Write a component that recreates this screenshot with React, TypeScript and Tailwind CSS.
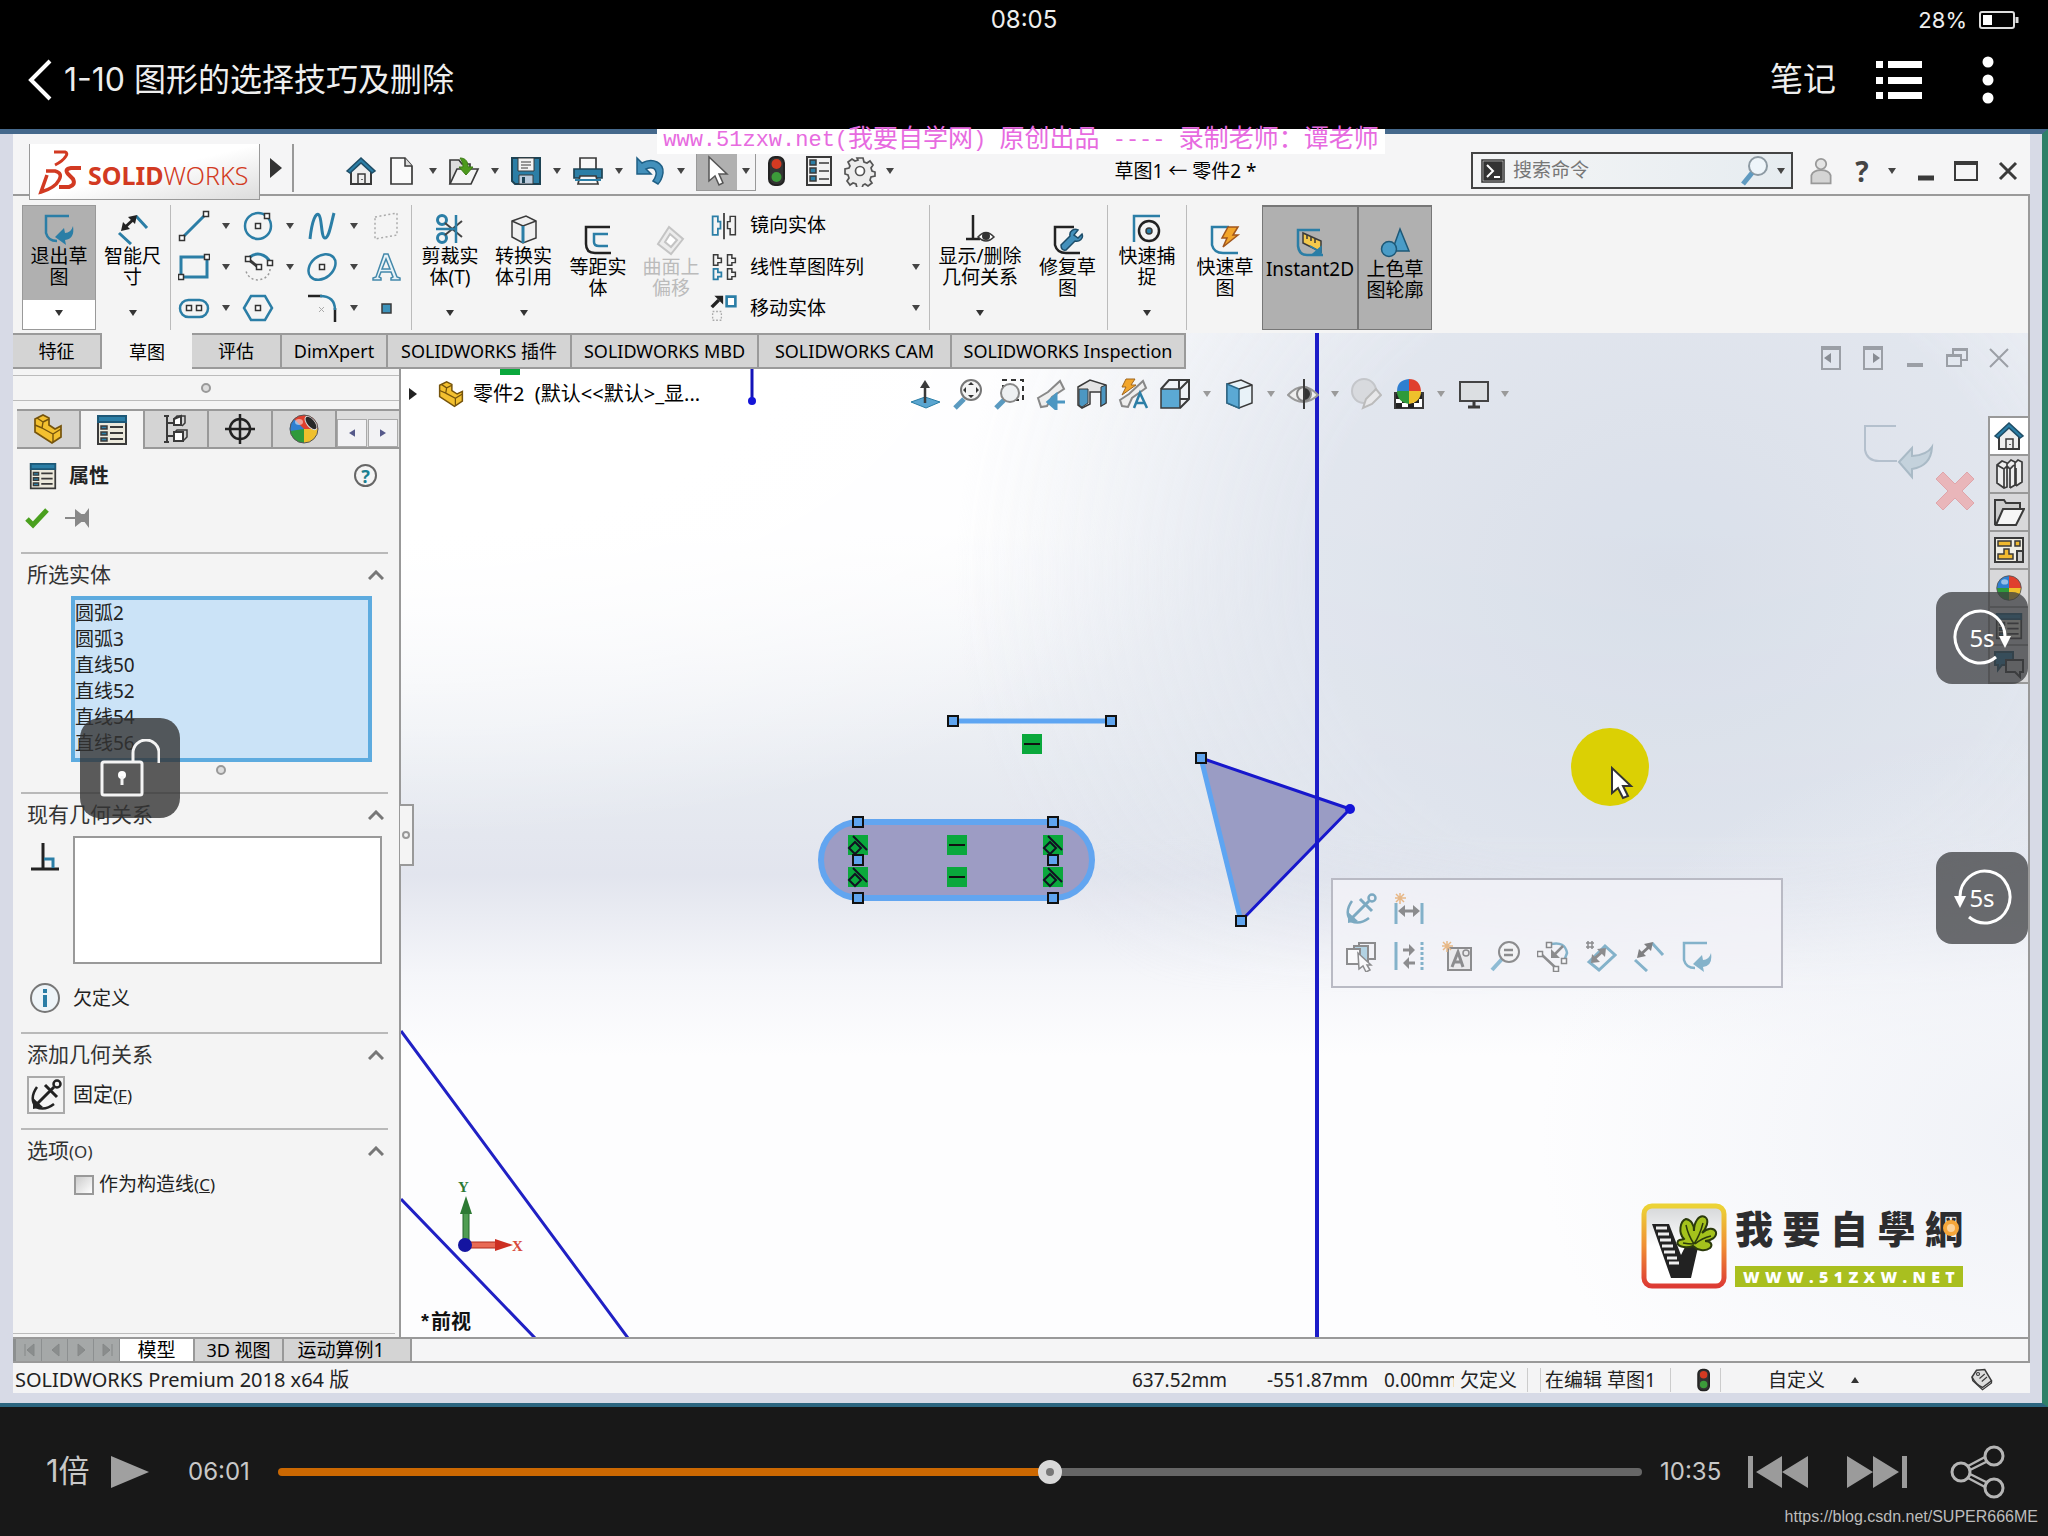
import type { ReactNode } from "react";

const BLUE = "#2b7ea6";
const DARK = "#3a3a3a";

function Ico({ children, size = "w-8 h-8", box = "0 0 32 32" }: { children: ReactNode; size?: string; box?: string }) {
  return (
    <svg viewBox={box} className={`${size} shrink-0`} fill="none" stroke={DARK} strokeWidth="2" aria-hidden="true">
      {children}
    </svg>
  );
}

function Caret({ className = "w-5", color = "#444" }: { className?: string; color?: string }) {
  return (
    <button type="button" aria-label="More" className={`flex items-center justify-center self-stretch shrink-0 ${className}`}>
      <svg viewBox="0 0 8 6" className="w-2 h-[6px]" fill={color}>
        <path d="M0 0h8l-4 6z" />
      </svg>
    </button>
  );
}

function IconButton({ label, className = "", children }: { label: string; className?: string; children: ReactNode }) {
  return (
    <button type="button" aria-label={label} className={`flex items-center justify-center shrink-0 ${className}`}>
      {children}
    </button>
  );
}

/* ---------- icons ---------- */

const HomeIcon = () => (
  <Ico>
    <path d="M6 15v14h20V15L16 6z" fill="#eee" />
    <path d="M13 29V19h7v10M17 24v1" strokeWidth="1.5" />
    <path d="M2 16 16 3l14 13-3 2L16 8 5 18z" fill={BLUE} stroke="#1f4d66" strokeWidth="1.5" />
  </Ico>
);
const NewIcon = () => (
  <Ico>
    <path d="M5 3h14l7 8v18H5z" fill="#fafafa" strokeWidth="1.7" />
    <path d="M19 3v8h7" fill="#ddd" strokeWidth="1.5" />
  </Ico>
);
const OpenIcon = () => (
  <Ico>
    <path d="M2 29V5h9l3 4h8v5" fill="#ddd" strokeWidth="1.7" />
    <path d="M2 29 9 14h21l-7 15z" fill="#f4f4f4" strokeWidth="1.7" />
    <path d="M12 3c6 0 8 4 8 9h5l-7 8-7-8h4c0-4-1-6-3-9z" fill="#4c9a1c" stroke="#3c7c14" strokeWidth="1" />
  </Ico>
);
const SaveIcon = () => (
  <Ico>
    <path d="M2 3h28v26H5l-3-3z" fill={BLUE} stroke="#1e4354" />
    <path d="M8 3h16v13H8z" fill="#f3f3f3" strokeWidth="1" />
    <path d="M11 7h10M11 10h10M11 13h7" strokeWidth="1" />
    <path d="M9 20h14v9H9z" fill="#bcd" strokeWidth="1" />
    <path d="M12 22h3v6h-3z" fill="#1e4354" stroke="none" />
  </Ico>
);
const PrintIcon = () => (
  <Ico>
    <path d="M8 3h16v12H8z" fill="#f8f8f8" strokeWidth="1.7" />
    <path d="M2 14h28v9H2z" fill={BLUE} stroke="#1e4354" strokeWidth="1.7" />
    <path d="M8 21h16l2 8H6z" fill="#f8f8f8" strokeWidth="1.7" />
    <path d="M3 25h26" stroke={BLUE} />
  </Ico>
);
const UndoIcon = () => (
  <Ico>
    <path d="m3 3 5 5c11-6 22 0 21 10-1 6-3 9-5 11l-5-3c6-8 3-16-7-12l5 5H3z" fill="#4390bb" stroke="#1f5f85" strokeWidth="1.5" />
  </Ico>
);
const CursorIcon = () => (
  <Ico size="w-8 h-9">
    <path d="M8 2v24l6-5 4 9 4-2-4-9h8z" fill="#fff" stroke="#555" strokeWidth="1.5" />
  </Ico>
);
const TrafficIcon = ({ size = "w-8 h-8" }: { size?: string }) => (
  <Ico size={size}>
    <rect x="8" y="2" width="15" height="28" rx="6" fill="#333" stroke="#222" />
    <circle cx="15.500" cy="9" r="5" fill="#d33a22" stroke="none" />
    <circle cx="15.500" cy="22" r="5" fill="#3c9b3a" stroke="none" />
  </Ico>
);
const OptionsIcon = () => (
  <Ico>
    <path d="M4 2h24v28H4z" fill="#f2f2f2" />
    <path d="M7 5h6v5H7zM7 13h6v5H7zM7 21h6v5H7z" fill={BLUE} strokeWidth="1.5" />
    <path d="M16 8h10M16 16h10M16 24h10" strokeWidth="1.5" />
  </Ico>
);
const GearIcon = () => (
  <Ico>
    <path d="M13 3h6l1 4 3 1 3-2 3 4-2 3 1 3 3 1v4l-4 1-1 3 2 3-4 3-3-2-2 1-1 3h-5l-1-4-3-1-3 2-3-4 2-3-1-3-3-1v-5l4-1 1-2-2-4 4-3 3 2 3-1z" fill="#ededed" stroke="#555" strokeWidth="1.7" />
    <circle cx="16" cy="16" r="4.500" fill="#fff" stroke="#555" strokeWidth="1.700" />
  </Ico>
);
const ExitSketchIcon = () => (
  <Ico>
    <path d="M26 3H3v17q2 8 11 8" stroke={BLUE} strokeWidth="2.500" />
    <path d="m12 24 9-9 1 5q6 0 8-7 2 13-8 14l1 5z" fill={BLUE} stroke="none" />
  </Ico>
);
const DimensionIcon = () => (
  <Ico>
    <path d="m19 3 11 12M2 20l12 11" stroke={BLUE} strokeWidth="3" />
    <path d="m6 16 12-11" stroke="#222" strokeWidth="3" />
    <path d="m4 18 2-9 7 7zM20 2l-9 2 7 7z" fill="#222" stroke="none" />
  </Ico>
);
const Node = ({ x, y }: { x: number; y: number }) => <rect x={x - 2.5} y={y - 2.5} width="5" height="5" fill="#fff" stroke="#333" strokeWidth="1.500" />;

const LineIcon = () => (
  <Ico><path d="M4 28 28 4" stroke={BLUE} strokeWidth="3" /><Node x={4} y={28} /><Node x={28} y={4} /></Ico>
);
const CircleIcon = () => (
  <Ico><circle cx="16" cy="16" r="13" stroke={BLUE} strokeWidth="2.500" /><Node x={16} y={16} /><Node x={25} y={6} /></Ico>
);
const SplineIcon = () => (
  <Ico><path d="M4 29C6 10 10 2 13 5s2 23 6 23S25 14 28 3" stroke={BLUE} strokeWidth="3" /></Ico>
);
const PlaneIcon = () => (
  <Ico><path d="m5 7 22-4v22L5 29z" stroke="#aaa" strokeWidth="1.500" strokeDasharray="2 2.500" /></Ico>
);
const RectIcon = () => (
  <Ico><path d="M3 6h26v20H3z" stroke={BLUE} strokeWidth="3" /><Node x={29} y={6} /><Node x={3} y={26} /></Ico>
);
const ArcIcon = () => (
  <Ico>
    <path d="M8 6c9-7 20 0 20 8" stroke={BLUE} strokeWidth="3" />
    <path d="M28 18c0 12-20 16-24 2" stroke="#999" strokeWidth="1.500" strokeDasharray="2 2.500" />
    <path d="m6 8 10 8" strokeWidth="3" />
    <Node x={6} y={8} /><Node x={17} y={16} /><Node x={28} y={12} />
  </Ico>
);
const EllipseIcon = () => (
  <Ico>
    <ellipse cx="16" cy="16" rx="15" ry="11" transform="rotate(-40 16 16)" stroke={BLUE} strokeWidth="2.500" />
    <Node x={16} y={16} />
  </Ico>
);
const TextIcon = () => (
  <Ico>
    <path d="M3 29h8v-2l-2-1 2-5h10l2 5-2 1v2h9v-2l-3-1L18 3h-4L6 26l-3 1zM12 18l4-10 4 10z" stroke="#4388aa" strokeWidth="1.500" fill="#e8f3f8" />
  </Ico>
);
const SlotIcon = () => (
  <Ico><rect x="2" y="8" width="28" height="17" rx="8.500" stroke={BLUE} strokeWidth="2.500" /><Node x={11} y={16} /><Node x={21} y={16} /></Ico>
);
const PolygonIcon = () => (
  <Ico><path d="M9 4h14l7 12-7 12H9L2 16z" stroke={BLUE} strokeWidth="2.500" /><Node x={16} y={16} /></Ico>
);
const FilletIcon = () => (
  <Ico>
    <path d="M2 4h14M29 16v14" stroke="#222" strokeWidth="2.500" />
    <path d="M14 4q15 0 15 14" stroke={BLUE} strokeWidth="2.500" />
    <path d="m13 15 5 5m0-5-5 5" stroke="#aaa" strokeWidth="1" />
  </Ico>
);
const PointIcon = () => <Ico><path d="M12 12h9v9h-9z" fill="#3c93bb" strokeWidth="1.500" /></Ico>;

const TrimIcon = () => (
  <Ico>
    <circle cx="8" cy="7" r="4.500" stroke={BLUE} strokeWidth="3" />
    <circle cx="8" cy="25" r="4.500" stroke={BLUE} strokeWidth="3" />
    <path d="m11 10 17 14M11 22 28 8" stroke="#444" />
    <path d="M22 2v28M2 16h20" stroke={BLUE} strokeWidth="2.500" />
  </Ico>
);
const ConvertIcon = () => (
  <Ico>
    <path d="m4 8 14-5 10 5v17l-13 5-11-6z" fill="#f0f0f0" strokeWidth="1.500" />
    <path d="m4 8 11 5 13-5" strokeWidth="1.500" />
    <path d="M15 13v17" stroke={BLUE} strokeWidth="3" />
  </Ico>
);
const OffsetIcon = () => (
  <Ico>
    <path d="M28 3H4v17q0 9 9 9h16" stroke="#222" strokeWidth="2.500" />
    <path d="M26 10H12v8q0 4 5 4h9" stroke={BLUE} strokeWidth="2.500" />
  </Ico>
);
const SurfaceOffsetIcon = () => (
  <Ico>
    <path d="m14 3 14 12-12 15L3 20z" stroke="#c4c4c4" fill="#ececec" />
    <path d="m15 10 7 6-6 7-6-5z" stroke="#c4c4c4" fill="#fff" />
  </Ico>
);
const MirrorIcon = () => (
  <Ico>
    <path d="M3 5h6v6h3v8H9v7H3z" stroke={BLUE} />
    <path d="M29 5h-6v6h-3v8h3v7h6z" strokeWidth="1.700" />
    <path d="M16 1v30" />
  </Ico>
);
const PatternIcon = () => (
  <Ico>
    <path d="M4 2h5v4h4v5H9v3H4zM20 2h5v4h4v5h-4v3h-5zM20 18h5v4h4v5h-4v3h-5z" strokeWidth="1.700" />
    <path d="M4 18h5v4h4v5H9v3H4z" stroke={BLUE} />
  </Ico>
);
const MoveIcon = () => (
  <Ico>
    <path d="m2 15 8-8" stroke="#222" strokeWidth="4" />
    <path d="M5 2h10v10z" fill="#222" stroke="none" />
    <path d="M19 3h10v11H19z" stroke={BLUE} strokeWidth="3" fill="#fff" />
    <path d="M3 20h10v10H3z" stroke="#aaa" strokeWidth="1.500" strokeDasharray="2 2" />
  </Ico>
);
const RelationsIcon = () => (
  <Ico>
    <path d="M9 2v24M2 26h14" stroke="#222" strokeWidth="2.500" />
    <path d="M14 24q8-9 16 0-8 8-16 0z" fill="#fff" strokeWidth="1.500" />
    <circle cx="22" cy="23" r="4" fill="#333" stroke="none" />
  </Ico>
);
const RepairIcon = () => (
  <Ico>
    <path d="M22 3H3v18q2 8 11 8h14" stroke="#222" strokeWidth="2.500" />
    <path d="m9 21 9-9c-1-5 4-8 8-6l-4 5 4 3 4-4c2 5-3 8-7 7l-9 9q-5 1-5-5z" fill="#4390bb" stroke="#1c4c68" strokeWidth="1.500" />
  </Ico>
);
const SnapIcon = () => (
  <Ico>
    <path d="M3 29V3h26" stroke={BLUE} strokeWidth="2.500" />
    <circle cx="18" cy="18" r="10" stroke="#222" strokeWidth="2.500" />
    <circle cx="18" cy="18" r="3" fill={BLUE} strokeWidth="1.500" />
  </Ico>
);
const RapidIcon = () => (
  <Ico>
    <path d="M20 3H3v18q2 8 11 8h15" stroke={BLUE} strokeWidth="2.500" />
    <path d="M19 3h10l-5 8h5L14 23l4-9h-5z" fill="#f2a62c" stroke="#a1561d" strokeWidth="1.500" />
  </Ico>
);
const Instant2DIcon = () => (
  <Ico>
    <path d="M26 4H4v16q1 9 9 9h16" stroke={BLUE} strokeWidth="2.500" />
    <path d="M9 7v10l18 9V15z" fill="#f3c84b" strokeWidth="1.500" />
    <path d="M13 9v4M17 11v4M21 13v4" strokeWidth="1.500" />
    <path d="m16 20 10 6M27 21v7h-8z" fill={BLUE} stroke={BLUE} strokeWidth="1.500" />
  </Ico>
);
const ShadedIcon = () => (
  <Ico>
    <path d="m21 3 9 22H13z" fill="#4a9cc7" stroke="#1d5877" strokeWidth="1.500" />
    <circle cx="10" cy="23" r="7.500" fill="#4a9cc7" stroke="#1d5877" strokeWidth="1.500" />
  </Ico>
);
const PartIcon = ({ size = "w-8 h-8" }: { size?: string }) => (
  <Ico size={size}>
    <path d="M3 13V6l8-4 6 3v7l6 4 6-3v11l-9 6L3 19z" fill="#f3c02f" stroke="#76540c" strokeWidth="1.700" />
    <path d="m3 12 7 3 1-6-6-4M11 9l6-3M10 15l11 6 8-5M21 21v8" stroke="#76540c" strokeWidth="1.400" />
  </Ico>
);
const PropertyIcon = ({ size = "w-8 h-8" }: { size?: string }) => (
  <Ico size={size}>
    <path d="M2 2h28v28H2z" fill="#ece9dc" />
    <path d="M2 2h28v6H2z" fill={BLUE} stroke="#1d5877" />
    <path d="M5 12h6v3H5zM5 18h6v3H5zM5 24h6v3H5z" fill={BLUE} strokeWidth="1.500" />
    <path d="M14 13h13M14 19h13M14 25h13" />
  </Ico>
);
const ConfigIcon = () => (
  <Ico>
    <path d="M7 3v26M4 3h5M4 29h5M7 10h7M7 23h7" />
    <path d="m14 6 7-3v9h-7zM14 19h9v9h-9z" fill="#fff" />
    <path d="m14 6 3-3h8v7l-3 3M14 20l3-3h10v7l-4 4" strokeWidth="1.500" />
  </Ico>
);
const TargetIcon = () => (
  <Ico><circle cx="16" cy="16" r="10" stroke="#222" strokeWidth="2.500" /><path d="M16 1v30M1 16h30" stroke="#222" strokeWidth="2.500" /></Ico>
);
const BallIcon = ({ size = "w-8 h-8", hole = false }: { size?: string; hole?: boolean }) => (
  <Ico size={size}>
    <path d="M16 16V2A14 14 0 0 0 2 16z" fill={hole ? "#e0402e" : "#2f7fd0"} stroke="none" />
    <path d="M16 16h14A14 14 0 0 0 16 2z" fill="#e0402e" stroke="none" />
    <path d="M16 16H2a14 14 0 0 0 14 14z" fill="#2f9a3b" stroke="none" />
    <path d="M16 16v14a14 14 0 0 0 14-14z" fill="#efc02c" stroke="none" />
    {hole && <path d="M16 16 6 6A14 14 0 0 0 2 18z" fill="#2f7fd0" stroke="none" />}
    <ellipse cx="11" cy="9" rx="4" ry="3" fill="#fff" opacity=".5" stroke="none" />
    {hole && <ellipse cx="23" cy="10" rx="8" ry="4" transform="rotate(50 23 10)" fill="#282828" stroke="#ddd" strokeWidth="1" />}
    <circle cx="16" cy="16" r="14" stroke="#555" strokeWidth="1" />
  </Ico>
);
const AnchorIcon = ({ color = "#222" }: { color?: string }) => (
  <Ico>
    <circle cx="27" cy="5" r="3.500" stroke={color} strokeWidth="2.500" />
    <path d="M24 8 7 25M15 6l12 12" stroke={color} strokeWidth="3" />
    <path d="M7 8Q-1 19 6 28q9 4 18-3" stroke={color} strokeWidth="2.500" />
    <path d="m3 19 10 9-10 2z" fill={color} stroke="none" />
  </Ico>
);

/* ---------- title bar ---------- */

const quickTools = [
  { label: "New", icon: <NewIcon /> },
  { label: "Open", icon: <OpenIcon /> },
  { label: "Save", icon: <SaveIcon /> },
  { label: "Print", icon: <PrintIcon /> },
  { label: "Undo", icon: <UndoIcon /> },
];

function TitleBar() {
  return (
    <div className="flex h-[60px] shrink-0 items-start bg-[#f5f5f6] pl-4 pr-[3px] pt-[10px]">
      <div className="relative z-10 flex h-14 w-[231px] shrink-0 items-center gap-1 border border-t-0 border-[#999] bg-gradient-to-br from-white via-white to-[#dcdcdc] pl-2">
        <svg viewBox="0 0 46 46" className="h-[46px] w-[46px] shrink-0" fill="none" stroke="#d23a22" strokeWidth="3">
          <path d="M16 3h11q3 1 1 4-3 5-11 9" />
          <path d="M8 22h9q8 2 4 9-4 8-18 12l6-17" strokeWidth="3.500" />
          <path d="M43 19H33q-7 1-3 6l5 5q3 6-4 8H21" strokeWidth="4" />
        </svg>
        <span className="pt-2 text-[25px] leading-none text-[#d23a22]">
          <b>SOLID</b><span className="font-light">WORKS</span>
        </span>
      </div>
      <IconButton label="Expand menu" className="h-12 w-[34px] border-r-2 border-[#999]">
        <svg viewBox="0 0 12 20" className="h-5 w-3" fill="#333"><path d="M0 0v20l12-10z" /></svg>
      </IconButton>
      <div className="ml-[51px] flex h-[46px] items-center pt-2">
        <IconButton label="Home" className="mr-[9px] w-8"><HomeIcon /></IconButton>
        {quickTools.map((t) => (
          <div key={t.label} className="flex w-[62px] items-center">
            <IconButton label={t.label} className="w-8">{t.icon}</IconButton>
            <Caret className="w-[30px]" />
          </div>
        ))}
        <div className="flex h-10 border border-[#999]">
          <IconButton label="Select" className="w-10 bg-[#b0b0b0]"><CursorIcon /></IconButton>
          <Caret className="w-[18px]" />
        </div>
        <IconButton label="Rebuild" className="w-[42px]"><TrafficIcon /></IconButton>
        <IconButton label="File properties" className="w-[42px]"><OptionsIcon /></IconButton>
        <IconButton label="Settings" className="w-10"><GearIcon /></IconButton>
        <Caret className="w-5" />
      </div>
      <h1 className="flex-1 pt-[15px] text-center text-[19px] leading-6 text-black">草图1 ← 零件2 *</h1>
      <form className="mt-2 flex h-[37px] w-[322px] shrink-0 items-center border-2 border-[#444] bg-gradient-to-r from-[#f4f5f6] to-[#e6ecf0] pl-2">
        <svg viewBox="0 0 24 24" className="h-6 w-6 shrink-0" fill="#333" stroke="#333" strokeWidth="1.500">
          <path d="M1 1h22v22H1z" fill="#fff" />
          <path d="M3 3h18v18H3z" />
          <path d="m6 6 6 6-6 6M13 18h6" fill="none" stroke="#fff" strokeWidth="2" />
        </svg>
        <input type="search" aria-label="搜索命令" placeholder="搜索命令" className="ml-2 min-w-0 flex-1 bg-transparent text-[19px] outline-none placeholder:text-[#777]" />
        <IconButton label="Search" className="w-8">
          <Ico size="w-8 h-8">
            <circle cx="19" cy="11" r="9" fill="#eef5fa" stroke="#8d9aa3" />
            <path d="m13 18-9 11" stroke="#5f9ac0" strokeWidth="5" />
          </Ico>
        </IconButton>
        <Caret />
      </form>
      <div className="flex h-[46px] items-center pt-2">
        <IconButton label="Account" className="w-14">
          <Ico size="w-7 h-8">
            <circle cx="16" cy="8" r="6" fill="#e4e4e4" stroke="#999" />
            <path d="M5 30V21q2-6 11-6t11 6v9z" fill="#d4d4d4" stroke="#999" />
          </Ico>
        </IconButton>
        <button type="button" className="w-[26px] text-[28px] font-bold leading-8 text-[#444]">?</button>
        <Caret className="w-[34px]" />
        <IconButton label="Minimize" className="w-[34px]">
          <Ico size="w-6 h-6" box="0 0 24 24"><path d="M4 19h16" strokeWidth="5" /></Ico>
        </IconButton>
        <IconButton label="Maximize" className="w-[46px]">
          <Ico size="w-6 h-6" box="0 0 24 24"><path d="M1 3h22v18H1z" /><path d="M1 4h22" strokeWidth="4" /></Ico>
        </IconButton>
        <IconButton label="Close" className="w-[38px]">
          <Ico size="w-6 h-6" box="0 0 24 24"><path d="m4 4 16 16M20 4 4 20" strokeWidth="3" /></Ico>
        </IconButton>
      </div>
    </div>
  );
}

/* ---------- ribbon ---------- */

type ToolProps = { icon: ReactNode; text: string; width: string; caret?: boolean; tone?: string };

function Tool({ icon, text, width, caret = false, tone = "" }: ToolProps) {
  return (
    <button type="button" className={`flex shrink-0 flex-col items-center ${width} ${tone} ${caret ? "pt-2" : "pt-[19px]"}`}>
      {icon}
      <span className="whitespace-pre pt-px text-[19px] leading-[21px]">{text}</span>
      {caret && (
        <svg viewBox="0 0 8 6" className="mb-[14px] mt-auto h-[6px] w-2" fill="#333"><path d="M0 0h8l-4 6z" /></svg>
      )}
    </button>
  );
}

const Sep = () => <div className="mx-px h-[125px] w-px shrink-0 bg-[#bbb]" />;

const sketchTools = [
  { label: "Line", icon: <LineIcon />, caret: true },
  { label: "Circle", icon: <CircleIcon />, caret: true },
  { label: "Spline", icon: <SplineIcon />, caret: true },
  { label: "Plane", icon: <PlaneIcon />, caret: false },
  { label: "Rectangle", icon: <RectIcon />, caret: true },
  { label: "Arc", icon: <ArcIcon />, caret: true },
  { label: "Ellipse", icon: <EllipseIcon />, caret: true },
  { label: "Text", icon: <TextIcon />, caret: false },
  { label: "Slot", icon: <SlotIcon />, caret: true },
  { label: "Polygon", icon: <PolygonIcon />, caret: false },
  { label: "Fillet", icon: <FilletIcon />, caret: true },
  { label: "Point", icon: <PointIcon />, caret: false },
];

const entityTools = [
  { label: "镜向实体", icon: <MirrorIcon />, caret: false },
  { label: "线性草图阵列", icon: <PatternIcon />, caret: true },
  { label: "移动实体", icon: <MoveIcon />, caret: true },
];

function Ribbon() {
  return (
    <div className="flex h-[141px] shrink-0 items-start border-y-2 border-r-2 border-[#9a9a9a] bg-[#f4f4f4] pl-[9px] pt-[9px]">
      <button type="button" className="flex h-[125px] w-[74px] shrink-0 flex-col items-center border border-[#999] bg-white">
        <span className="flex w-full flex-col items-center bg-[#b0b0b0] pb-3 pt-[7px]">
          <ExitSketchIcon />
          <span className="whitespace-pre pt-px text-[19px] leading-[21px]">{"退出草\n图"}</span>
        </span>
        <svg viewBox="0 0 8 6" className="mb-[13px] mt-auto h-[6px] w-2" fill="#333"><path d="M0 0h8l-4 6z" /></svg>
      </button>
      <div className="flex h-[125px]">
        <Tool icon={<DimensionIcon />} text={"智能尺\n寸"} width="w-[73px]" caret />
        <Sep />
        <div className="grid h-[124px] w-[238px] shrink-0 grid-cols-[64px_64px_64px_40px] grid-rows-3 pl-[2px]">
          {sketchTools.map((t) => (
            <div key={t.label} className="flex items-center">
              <IconButton label={t.label} className="w-10">{t.icon}</IconButton>
              {t.caret && <Caret className="w-6" />}
            </div>
          ))}
        </div>
        <Sep />
        <Tool icon={<TrimIcon />} text={"剪裁实\n体(T)"} width="w-[74px]" caret />
        <Tool icon={<ConvertIcon />} text={"转换实\n体引用"} width="w-[73px]" caret />
        <Tool icon={<OffsetIcon />} text={"等距实\n体"} width="w-[76px]" />
        <Tool icon={<SurfaceOffsetIcon />} text={"曲面上\n偏移"} width="w-[70px]" tone="text-[#bbb]" />
        <div className="grid h-[124px] w-[222px] shrink-0 grid-rows-3">
          {entityTools.map((t) => (
            <div key={t.label} className="flex items-center">
              <button type="button" className="flex flex-1 items-center gap-3 pl-1 text-left text-[19px]">
                <Ico size="w-7 h-7">{t.icon}</Ico>
                {t.label}
              </button>
              {t.caret && <Caret className="w-6" />}
            </div>
          ))}
        </div>
        <Sep />
        <Tool icon={<RelationsIcon />} text={"显示/删除\n几何关系"} width="w-[98px]" caret />
        <Tool icon={<RepairIcon />} text={"修复草\n图"} width="w-[77px]" />
        <Sep />
        <Tool icon={<SnapIcon />} text={"快速捕\n捉"} width="w-[76px]" caret />
        <Sep />
        <Tool icon={<RapidIcon />} text={"快速草\n图"} width="w-[74px]" />
        <Tool icon={<Instant2DIcon />} text="Instant2D" width="w-24" tone="bg-[#b0b0b0] border border-t-2 border-[#777]" />
        <Tool icon={<ShadedIcon />} text={"上色草\n图轮廓"} width="w-[74px]" tone="bg-[#b0b0b0] border border-t-2 border-[#777]" />
      </div>
    </div>
  );
}

const commandTabs = [
  { label: "特征", width: "w-[89px]" },
  { label: "草图", width: "w-[90px]", active: true },
  { label: "评估", width: "w-[90px]" },
  { label: "DimXpert", width: "w-[106px]" },
  { label: "SOLIDWORKS 插件", width: "w-[184px]" },
  { label: "SOLIDWORKS MBD", width: "w-[187px]" },
  { label: "SOLIDWORKS CAM", width: "w-[193px]" },
  { label: "SOLIDWORKS Inspection", width: "w-[234px]" },
];

function CommandTabs() {
  return (
    <div role="tablist" className="absolute left-0 top-0 z-10 flex h-9">
      {commandTabs.map((t) => (
        <button
          key={t.label}
          type="button"
          role="tab"
          aria-selected={!!t.active}
          className={`shrink-0 whitespace-nowrap border-t-2 text-[18px] leading-8 ${t.width} ${
            t.active ? "border-[#f4f4f4] bg-[#f4f4f4]" : "border-b-2 border-r-2 border-[#9a9a9a] bg-[#d4d4d4]"
          }`}
        >
          {t.label}
        </button>
      ))}
    </div>
  );
}

/* ---------- property panel ---------- */

function SectionHead({ children }: { children: ReactNode }) {
  return (
    <button type="button" className="flex h-11 w-full items-center justify-between border-t-2 border-[#b9b9b9] pl-[6px] pr-1 text-[21px] text-[#333]">
      <span>{children}</span>
      <svg viewBox="0 0 16 10" className="h-[10px] w-4" fill="none" stroke="#777" strokeWidth="3"><path d="m1 9 7-7 7 7" /></svg>
    </button>
  );
}

const panelTabs = [
  { label: "FeatureManager", icon: <PartIcon />, active: false },
  { label: "PropertyManager", icon: <PropertyIcon />, active: true },
  { label: "ConfigurationManager", icon: <ConfigIcon />, active: false },
  { label: "DimXpertManager", icon: <TargetIcon />, active: false },
  { label: "DisplayManager", icon: <BallIcon hole />, active: false },
];

const selected = ["圆弧2", "圆弧3", "直线50", "直线52", "直线54", "直线56"];

function PropertyPanel() {
  return (
    <aside className="relative flex w-[388px] shrink-0 flex-col border-r-2 border-[#999] bg-[#f4f4f4] pt-9 text-[#222]">
      <div className="mt-[6px] flex h-[26px] items-center justify-center border-y border-[#bbb]">
        <span className="h-[10px] w-[10px] rounded-full border-2 border-[#999] bg-[#ddd]" />
      </div>
      <div className="mt-2 flex h-10 pl-1" role="tablist">
        {panelTabs.map((t) => (
          <button
            key={t.label}
            type="button"
            role="tab"
            aria-label={t.label}
            aria-selected={t.active}
            className={`flex w-16 shrink-0 items-center justify-center border-r-2 border-t-2 border-[#999] ${t.active ? "" : "border-b-2 bg-[#d4d4d4]"}`}
          >
            {t.icon}
          </button>
        ))}
        <div className="flex flex-1 items-end gap-px border-b-2 border-t-2 border-[#999] bg-[#ddd]">
          {["M8 0v10L0 5z", "M0 0v10l8-5z"].map((d) => (
            <IconButton key={d} label="Scroll tabs" className="h-7 w-[30px] border border-[#aaa] bg-[#f2f2f4]">
              <svg viewBox="0 0 8 10" className="h-2 w-[6px]" fill="#55598a"><path d={d} /></svg>
            </IconButton>
          ))}
        </div>
      </div>
      <div className="flex h-[53px] items-center pl-4 pr-[22px]">
        <PropertyIcon size="w-7 h-7" />
        <h2 className="ml-3 flex-1 text-[20px] font-bold">属性</h2>
        <button type="button" className="flex h-[23px] w-[23px] items-center justify-center rounded-full border-2 border-[#666] text-[18px] font-bold leading-none text-[#1c8090]">?</button>
      </div>
      <div className="flex h-[50px] items-start gap-4 pl-3 pt-1">
        <IconButton label="OK">
          <Ico size="w-6 h-6" box="0 0 24 24"><path d="m2 13 6 6L22 4" stroke="#4aa01e" strokeWidth="5" /></Ico>
        </IconButton>
        <IconButton label="Keep visible">
          <Ico size="w-6 h-6" box="0 0 24 24"><path d="M0 12h11v-7l5 4h4l3-4v14l-3-4h-4l-5 4v-7" fill="#888" stroke="#888" /></Ico>
        </IconButton>
      </div>
      <div className="ml-2 mr-[11px]">
        <SectionHead>所选实体</SectionHead>
        <ul role="listbox" aria-label="所选实体" className="ml-[50px] mr-4 h-[166px] border-4 border-[#5dabdf] bg-[#cbe3f7] text-[19px] leading-[26px]">
          {selected.map((s) => (
            <li key={s} role="option" aria-selected="true">{s}</li>
          ))}
        </ul>
        <div className="flex h-[30px] justify-center pl-8 pt-[3px]">
          <span className="h-[10px] w-[10px] rounded-full border-2 border-[#999] bg-[#ddd]" />
        </div>
        <SectionHead>现有几何关系</SectionHead>
        <div className="flex pl-2">
          <Ico size="w-8 h-9">
            <path d="M14 5v26M2 31h28" stroke="#222" strokeWidth="3" />
            <path d="M15 21h9v9" stroke={BLUE} strokeWidth="3" />
          </Ico>
          <ul role="listbox" aria-label="现有几何关系" className="ml-3 mr-[6px] h-32 flex-1 border-2 border-[#999] bg-white" />
        </div>
        <div className="flex h-[68px] items-center pl-2 text-[19px]">
          <Ico>
            <circle cx="16" cy="16" r="14" fill="#eef4f8" stroke="#777" />
            <path d="M16 13v12M16 7v4" stroke={BLUE} strokeWidth="4" />
          </Ico>
          <span className="ml-3">欠定义</span>
        </div>
        <SectionHead>添加几何关系</SectionHead>
        <button type="button" className="mb-[14px] ml-[6px] flex items-center text-[20px]">
          <span className="mr-2 flex h-[38px] w-[38px] items-center justify-center border-2 border-[#aaa]"><AnchorIcon /></span>
          <span>固定<span className="text-[17px]">(<u>F</u>)</span></span>
        </button>
        <SectionHead>选项<span className="text-[17px]">(O)</span></SectionHead>
        <label className="ml-[53px] flex items-center gap-[5px] text-[19px] leading-6">
          <input type="checkbox" className="h-5 w-5 appearance-none border-2 border-[#999] bg-gradient-to-br from-[#ccc] to-white" />
          <span>作为构造线<span className="text-[17px]">(<u>C</u>)</span></span>
        </label>
      </div>
      <div className="mb-[3px] mr-1 mt-auto h-px bg-[#bbb]" />

      {/* collapse handle */}
      <button type="button" aria-label="Collapse panel" className="absolute left-[387px] top-[471px] z-10 flex h-[62px] w-[14px] items-center justify-center border-2 border-l-0 border-[#999] bg-[#f4f4f4]">
        <span className="h-2 w-2 rounded-full border-2 border-[#999]" />
      </button>
    </aside>
  );
}

/* ---------- graphics area ---------- */

const handles = [
  [552, 388], [710, 388], [457, 489], [652, 489], [457, 527], [652, 527],
  [457, 565], [652, 565], [800, 425], [840, 588],
];
const horizontals = [[631, 411], [556, 512], [556, 544]];
const tangents = [[457, 512], [457, 544], [652, 512], [652, 544]];

function Sketch() {
  return (
    <svg className="absolute inset-0 h-full w-full" fill="none" aria-hidden="true">
      <path d="M351 35v33" stroke="#1414b8" strokeWidth="3" />
      <circle cx="351" cy="68" r="4" fill="#1414d8" />
      <path d="M99 35h20v7H99z" fill="#0aa83c" />
      <path d="M0 698 227 1005M0 866l134 139" stroke="#2020c4" strokeWidth="3" />
      <path d="m800 425 149 51-109 112z" fill="#9a9cc4" />
      <path d="M916 0v1006" stroke="#1c1cc8" strokeWidth="4" />
      <path d="m800 425 149 51-109 112" stroke="#1717cc" strokeWidth="3" />
      <path d="m800 425 40 163M552 388h158" stroke="#5ea5f2" strokeWidth="5" />
      <circle cx="949" cy="476" r="5" fill="#1414d8" />
      <rect x="420" y="489" width="271" height="76" rx="38" fill="#9d9cc4" stroke="#62a5f0" strokeWidth="6" />
      {horizontals.map(([x, y]) => (
        <g key={`${x}-${y}`}>
          <path d={`M${x - 10} ${y - 10}h20v20h-20z`} fill="#0aa83c" />
          <path d={`M${x - 8} ${y}h16`} stroke="#111" strokeWidth="2" />
        </g>
      ))}
      {tangents.map(([x, y]) => (
        <g key={`${x}-${y}`}>
          <path d={`M${x - 10} ${y - 10}h20v20h-20z`} fill="#0aa83c" />
          <path d={`m${x - 5} ${y - 9} 14 14M${x - 9} ${y + 3}l6-6 6 6-6 6z`} stroke="#112" strokeWidth="2" />
        </g>
      ))}
      {handles.map(([x, y]) => (
        <rect key={`${x}-${y}`} x={x - 5} y={y - 5} width="10" height="10" fill="#5fa4ee" stroke="#111" strokeWidth="2" />
      ))}

      {/* triad */}
      <path d="M62 908v-28h6v28z" fill="#4f9d52" stroke="#23662a" />
      <path d="m65 863 6 18H59z" fill="#2d7a34" />
      <path d="M67 909v6h28v-6z" fill="#e86a55" stroke="#b02a1c" />
      <path d="m112 912-18-6v12z" fill="#cc2f22" />
      <circle cx="64" cy="912" r="7" fill="#1414a0" />
      <text x="57" y="859" fontSize="15" fontFamily="Liberation Serif" fontWeight="bold" fill="#2d7a34">Y</text>
      <text x="111" y="918" fontSize="15" fontFamily="Liberation Serif" fontWeight="bold" fill="#d84a3c">X</text>
      <text x="18" y="996" fontSize="20" fontFamily="Liberation Mono, Noto Sans CJK SC" fontWeight="bold" fill="#111">*前视</text>

      {/* pointer highlight */}
      <circle cx="1209" cy="434" r="39" fill="#dbd004" />
      <path d="M1211 435v25l6-5 5 10 5-2-5-10h8z" fill="#fff" stroke="#333" strokeWidth="2" />
    </svg>
  );
}

function ViewToolbar() {
  const g = "#9a9a9a";
  return (
    <div className="absolute left-[504px] top-[45px] flex h-8 items-center">
      <IconButton label="Normal to" className="w-[42px]">
        <Ico><path d="m1 24 14-5 15 5-14 6z" fill="#5aa5d0" stroke="#2b7ea6" strokeWidth="1" /><path d="M15 25V8" strokeWidth="2.500" /><path d="m15 2 5 8H10z" fill={DARK} stroke="none" /></Ico>
      </IconButton>
      <IconButton label="Zoom to fit" className="w-[41px]">
        <Ico><path d="M12 21 3 30" stroke="#5a9ac0" strokeWidth="5" /><circle cx="19" cy="12" r="10" fill="#f4f4f4" stroke="#777" /><path d="m19 4 3 3h-6zM19 20l3-3h-6zM11 12l3-3v6zM27 12l-3-3v6z" fill="#333" stroke="none" /></Ico>
      </IconButton>
      <IconButton label="Zoom to area" className="w-[42px]">
        <Ico><path d="M10 12V2h20v20h-7" stroke="#333" strokeDasharray="5 4" /><path d="m11 22-8 8" stroke="#5a9ac0" strokeWidth="5" /><circle cx="17" cy="15" r="9" fill="#eef0f2" stroke="#888" /></Ico>
      </IconButton>
      <IconButton label="Previous view" className="w-[41px]">
        <Ico><path d="m3 20 10-6L25 3l4 8-12 8-5 9-6 1z" fill="#eee" stroke="#888" /><path d="M30 24H20M21 17l-8 7 8 7z" fill="#4c97c2" stroke="#4c97c2" strokeWidth="3" /></Ico>
      </IconButton>
      <IconButton label="Section view" className="w-[41px]">
        <Ico><path d="m2 9 12-7 16 5v18l-5 3V14H14v12L6 30l-4-3z" fill="#e4e4e4" strokeWidth="1.500" /><path d="M3 11h9v14l-6 4-3-2zM25 9l5-2v18l-5 3z" fill="#4c97c2" strokeWidth="1" /></Ico>
      </IconButton>
      <IconButton label="Annotation views" className="w-[42px]">
        <Ico><path d="m3 22 9-6L26 3l3 7-14 10-4 9-6-1z" fill="#eee" stroke="#888" /><path d="M9 1h9l-4 6h5L5 17l4-8H5z" fill="#f2a62c" stroke="#a1661d" strokeWidth="1" /><path d="m17 30 6-15 7 15M19 25h9" stroke="#2b7ea6" strokeWidth="2.500" /></Ico>
      </IconButton>
      <IconButton label="View orientation" className="w-[42px]">
        <Ico><path d="m2 11 8-9h20v19l-9 9M21 11l9-9M20 2v19h10" fill="none" /><path d="M2 11h19v19H2z" fill="#5ba9d4" strokeWidth="1.500" /></Ico>
      </IconButton>
      <Caret className="w-[22px]" color={g} />
      <IconButton label="Display style" className="w-[44px]">
        <Ico><path d="m3 6 14-4 11 5v18l-13 5-12-5z" fill="#e8f2f8" strokeWidth="1.500" /><path d="m3 6 12 5v19L3 25z" fill="#5ba9d4" stroke="#2b6a8c" strokeWidth="1.500" /><path d="m15 11 13-4" strokeWidth="1.500" /></Ico>
      </IconButton>
      <Caret className="w-[18px]" color={g} />
      <IconButton label="Hide or show items" className="w-[46px]">
        <Ico><path d="M1 17Q16 1 31 17 16 31 1 17z" fill="#eee" stroke="#999" /><path d="M17 9a7 7 0 0 1 0 14z" fill="#333" stroke="none" /><circle cx="17" cy="16" r="7" stroke="#888" /><path d="M17 1v30" /></Ico>
      </IconButton>
      <Caret className="w-[18px]" color={g} />
      <IconButton label="Edit appearance" className="w-[44px]">
        <Ico><circle cx="14" cy="13" r="12" fill="#d8dade" stroke="#c4c6ca" /><path d="m13 30 3-9 10-10 5 6-9 9z" fill="#e8e8ea" stroke="#bbb" /></Ico>
      </IconButton>
      <IconButton label="Apply scene" className="w-[42px]">
        <Ico><path d="M2 15h28v15H2z" fill="#fff" /><path d="M3 16h6v5H3zM15 25h6v5h-6zM23 16h6v5h-6zM3 25h6v5H3zM9 21h6v4H9zM21 21h5v4h-5z" fill="#222" stroke="none" /><path d="M16 13V1q-12 1-12 12z" fill="#2f7fd0" stroke="none" /><path d="M16 13h12Q27 1 16 1z" fill="#e0402e" stroke="none" /><path d="M16 13v13q-12-2-12-13z" fill="#2f9a3b" stroke="none" /><path d="M16 13h12q0 11-12 13z" fill="#efc02c" stroke="none" /></Ico>
      </IconButton>
      <Caret className="w-[22px]" color={g} />
      <IconButton label="View settings" className="w-[44px]">
        <Ico><path d="M2 4h28v19H2z" fill="#dcdfe2" stroke="#444" /><path d="M16 23v6M10 29h12" strokeWidth="3" /></Ico>
      </IconButton>
      <Caret className="w-[18px]" color={g} />
    </div>
  );
}

const docIcons = [
  { label: "Previous window", d: "M3 1h18v22H3zM3 3h18", fill: "M12 7v10l-7-5z" },
  { label: "Next window", d: "M3 1h18v22H3zM3 3h18", fill: "M12 7v10l7-5z" },
  { label: "Minimize document", d: "M4 18h16M4 20h16", fill: "" },
  { label: "Restore document", d: "M2 9h14v11H2zM8 8V3h14v11h-5M8 4h14M2 10h14", fill: "" },
  { label: "Close document", d: "m3 3 18 18M21 3 3 21", fill: "" },
];

const contextIcons = [
  <Ico key="select"><path d="M14 3h16v16H14z" /><path d="M9 6h14v15H9z" fill="#7fb8d4" /><path d="M2 9h13v15H2z" fill="#fff" /><path d="m13 13 1 16 4-3 3 6 4-2-3-5h4z" fill="#fff" strokeWidth="1.500" /></Ico>,
  <Ico key="construct"><path d="M3 2v28" stroke={BLUE} strokeWidth="3" /><path d="M29 2v28" stroke={BLUE} strokeWidth="3" strokeDasharray="3 2" /><path d="M10 10h7M22 23h-7" strokeWidth="3" /><path d="m16 4 6 6-6 6zM16 17l-6 6 6 6z" fill={DARK} stroke="none" /></Ico>,
  <Ico key="note"><path d="M7 8h23v22H7z" fill="#e4e4e4" /><path d="m11 27 6-15 5 15M13 22h8" strokeWidth="3" /><circle cx="25" cy="13" r="3" strokeWidth="1.500" /><path d="M6 1v11M1 6h11M2 2l8 8M10 2l-8 8" stroke="#e08a2c" strokeWidth="1.500" /></Ico>,
  <Ico key="magnify"><path d="M13 19 3 30" stroke="#3d8fb8" strokeWidth="4" /><circle cx="20" cy="12" r="10" fill="#f4f4f4" /><path d="M15 10h9M15 15h9" strokeWidth="2.500" /></Ico>,
  <Ico key="move"><path d="M14 4q14-3 16 9l-3 8" stroke={BLUE} strokeWidth="2.500" /><path d="m4 14 16 15M26 6l-9 9" strokeWidth="2.500" /><path d="M14 18V9l9 9z" fill={DARK} stroke="none" /><Node x={3} y={14} /><Node x={12} y={5} /><Node x={27} y={21} /><Node x={19} y={29} /></Ico>,
  <Ico key="measure"><path d="m4 22 16-16 10 9-16 15z" stroke={BLUE} strokeWidth="3" /><path d="m8 20 10-9" strokeWidth="3" /><path d="m6 23 1-9 8 8zM21 8l-9 1 8 8z" fill={DARK} stroke="none" /><path d="M3 1v8M7 1v8M1 3h8M1 7h8" strokeWidth="1.500" /></Ico>,
  <DimensionIcon key="dimension" />,
  <ExitSketchIcon key="exit" />,
];

const taskIcons = [
  <HomeIcon key="home" />,
  <Ico key="library"><path d="m4 7 5-4 5 2v24l-3 1-7-5zM14 6l4-4 4 2v23l-5 3M22 5l3-3 4 2v20l-6 4M4 7l7 4v19M11 11l3-3M17 11v19M14 8l3 3 4-4M23 10v18" fill="#eee" strokeWidth="1.700" /></Ico>,
  <Ico key="explorer"><path d="M2 29V4h9l2 3h14v6" fill="#ccc" /><path d="M3 29 10 13h21l-8 16z" fill="#f6f6f6" /></Ico>,
  <Ico key="palette"><path d="M2 4h28v24H2z" fill="#f0eee4" /><path d="M5 7h13v5H5zM22 7h5v5h-5zM11 15h5v5h4v5H5v-5h6z" fill="#f0b92f" strokeWidth="1.500" /><path d="M24 17h6v11h-6z" fill="#ccc" /></Ico>,
  <BallIcon key="ball" size="w-7 h-7" />,
  <PropertyIcon key="props" size="w-7 h-7" />,
  <Ico key="forum"><path d="M2 4h18v13H9l-4 5v-5H2z" fill={BLUE} stroke="#1d4f6a" /><path d="M13 12h17v12h-3v5l-5-5h-9z" fill="#ccc" /></Ico>,
];

function SiteLogo() {
  return (
    <div className="absolute bottom-12 right-[65px] flex items-end gap-2">
      <svg viewBox="0 0 86 86" className="h-[86px] w-[86px]" fill="none">
        <defs>
          <linearGradient id="frame" x1="0" y1="0" x2="0" y2="1">
            <stop offset="0" stopColor="#ecd336" /><stop offset=".5" stopColor="#f08f34" /><stop offset="1" stopColor="#dd3b34" />
          </linearGradient>
          <linearGradient id="plate" x1="0" y1="0" x2="0" y2="1">
            <stop offset="0" stopColor="#d5d7d9" /><stop offset=".5" stopColor="#fff" />
          </linearGradient>
        </defs>
        <rect x="3" y="3" width="80" height="80" rx="8" fill="url(#plate)" stroke="url(#frame)" strokeWidth="5" />
        <path d="M11 21h17l12 31 6-12h12L50 75H30z" fill="#222" />
        <path d="m15 25 11 0M17 31l11 0M19 37l11 0M21 43l11 0M23 49l11 0M26 55l10 0M28 60l10 0" stroke="#eee" strokeWidth="3" />
        <path d="M52 43c-8 3-18 0-15-5 2-2 5-1 6-2-6-6-4-18 2-20 6 1 8 7 8 12 0-9 5-17 11-14 5 3 1 12-3 16 5-5 12-6 14-1 1 5-5 9-11 9 6 0 8 4 5 7-5 4-13 2-17-2z" fill="#a4c21c" stroke="#2b3a0c" strokeWidth="2" />
        <path d="M45 22q2 10 8 19M62 20q-3 12-9 21M70 33q-9 2-16 8M42 40q5 1 11 1" stroke="#2b3a0c" strokeWidth="1.500" />
      </svg>
      <div className="flex w-[228px] flex-col">
        <div className="relative flex justify-between text-[38px] font-black leading-10 text-[#2d2d2f]">
          {[..."我要自學網"].map((c) => (
            <span key={c}>{c}</span>
          ))}
          <span className="absolute right-1 top-3 h-4 w-4 rounded-full border-4 border-[#f5a63a] bg-[#fbd29a]" />
        </div>
        <div className="mb-[2px] mt-[18px] flex h-[21px] items-center justify-between bg-[#a9bf1f] px-2 text-[16px] font-black text-white">
          {[..."WWW.51ZXW.NET"].map((c, i) => (
            <span key={i}>{c}</span>
          ))}
        </div>
      </div>
    </div>
  );
}

function SeekButton({ label, flip = false }: { label: string; flip?: boolean }) {
  return (
    <button type="button" aria-label={label} className="relative flex h-[92px] w-[92px] items-center justify-center rounded-2xl bg-[#3c3d40]/75 text-white">
      <svg viewBox="0 0 60 60" className="absolute h-[60px] w-[60px]" fill="none" stroke="#fff" strokeWidth="3">
        {flip ? (
          <>
            <path d="M8 30A25 26 0 1 1 17 49" />
            <path d="M2 28h12l-6 12z" fill="#fff" stroke="none" />
          </>
        ) : (
          <>
            <path d="M53 30A25 26 0 1 0 44 49" />
            <path d="M47 28h12l-6 12z" fill="#fff" stroke="none" />
          </>
        )}
      </svg>
      <span className="text-[24px]">5s</span>
    </button>
  );
}

function Canvas() {
  return (
    <main className="relative min-w-0 flex-1 overflow-hidden border-r-2 border-[#999] bg-[#fdfdfe]">
      <div className="absolute inset-0 bg-[linear-gradient(180deg,transparent_20%,#e4e8ef_45%,#dfe2ec_54%,#f4f5f9_64%,#fdfdfe_72%)] opacity-90" />
      <div className="absolute inset-0 bg-[radial-gradient(ellipse_60%_50%_at_0%_0%,#fff_40%,transparent)]" />
      <div className="absolute inset-0 bg-[radial-gradient(ellipse_44%_62%_at_78%_24%,#d6dde8_0%,#dfe4ed_50%,transparent)] opacity-90 [mask-image:linear-gradient(180deg,#000_50%,transparent_66%)]" />
      <div className="absolute inset-0 bg-[radial-gradient(ellipse_30%_40%_at_100%_80%,#f0f2f7,transparent)]" />
      <Sketch />

      <button type="button" className="absolute left-2 top-[47px] flex items-center text-[20px] leading-7 text-black">
        <svg viewBox="0 0 8 12" className="mr-5 h-3 w-2" fill="#222"><path d="M0 0v12l8-6z" /></svg>
        <PartIcon size="w-7 h-7" />
        <span className="ml-2 whitespace-pre">零件2  (默认&lt;&lt;默认&gt;_显...</span>
      </button>
      <ViewToolbar />

      <div className="absolute right-2 top-[13px] flex">
        {docIcons.map((d) => (
          <IconButton key={d.label} label={d.label} className="w-[42px]">
            <svg viewBox="0 0 24 24" className="h-6 w-6" fill="none" stroke="#9b9fa6" strokeWidth="2">
              <path d={d.d} />
              {d.fill && <path d={d.fill} fill="#888c93" stroke="none" />}
            </svg>
          </IconButton>
        ))}
      </div>

      {/* confirmation corner */}
      <svg viewBox="0 0 112 92" className="absolute right-[53px] top-[90px] h-[92px] w-28" fill="none">
        <path d="M33 3H2v24q2 11 14 11h18" stroke="#b4c0cd" strokeWidth="2" />
        <path d="m36 39 13-14v8q15-1 20-9-1 19-20 22v8z" fill="#c4d2dc" stroke="#a9bac6" strokeWidth="2" />
        <path d="m73 56 7-7 12 12 12-12 7 7-12 12 12 12-7 7-12-12-12 12-7-7 12-12z" fill="#e9b6ba" stroke="#dfa5aa" />
      </svg>

      {/* context toolbar */}
      <div className="absolute left-[930px] top-[545px] h-[110px] w-[452px] border-2 border-[#b9bac4] bg-[#f3f3f8]/80">
        <div className="grid grid-cols-[repeat(8,48px)] grid-rows-[47px_47px] items-center pl-1 pt-[5px] opacity-55">
          <IconButton label="Fix"><AnchorIcon color="#1c6f96" /></IconButton>
          <IconButton label="Smart distance">
            <Ico><path d="M3 10v21M29 10v21" stroke={BLUE} strokeWidth="3" /><path d="M8 18h16" strokeWidth="3" /><path d="m5 18 7-6v12zM27 18l-7-6v12z" fill={DARK} stroke="none" /><path d="M7 0v11M2 5h11M3 1l8 8M11 1 3 9" stroke="#e08a2c" strokeWidth="1.500" /></Ico>
          </IconButton>
          {contextIcons.map((icon, i) => (
            <IconButton key={i} label={`Context tool ${i + 1}`} className={i === 0 ? "col-start-1" : ""}>{icon}</IconButton>
          ))}
        </div>
      </div>

      {/* task pane tabs */}
      <div className="absolute right-0 top-[83px] flex w-10 flex-col border-l-2 border-t-2 border-[#999]">
        {taskIcons.map((icon, i) => (
          <IconButton key={i} label={`Task pane ${i + 1}`} className={`h-[38px] border-b-2 border-[#999] ${i === 0 ? "bg-white" : "bg-[#d8d8da]"}`}>
            {icon}
          </IconButton>
        ))}
      </div>
      <div className="absolute right-0 top-[259px] flex flex-col gap-[168px]">
        <SeekButton label="Forward 5 seconds" />
        <SeekButton label="Back 5 seconds" flip />
      </div>
      <SiteLogo />
    </main>
  );
}

/* ---------- bottom strips ---------- */

function ModelTabs() {
  return (
    <div className="flex h-[26px] shrink-0 border-y-2 border-r-2 border-[#999] bg-[#f5f5f6] text-[18px] leading-[22px]">
      <div className="flex w-[107px] shrink-0 gap-px bg-[#8c8f90] pl-[3px]">
        {["M4 1v12M13 1v12L6 7z", "M12 1v12L5 7z", "M5 1v12l7-6z", "M13 1v12M4 1v12l7-6z"].map((d) => (
          <IconButton key={d} label="Scroll tabs" className="w-[25px] bg-[#a5a8a8]">
            <svg viewBox="0 0 16 14" className="h-[14px] w-4" fill="#8a8d8d" stroke="#858888"><path d={d} /></svg>
          </IconButton>
        ))}
      </div>
      <button type="button" className="w-[73px] bg-white text-[19px]">模型</button>
      <button type="button" className="w-[91px] border-x-2 border-[#999] bg-[#d4d4d4]">3D 视图</button>
      <button type="button" className="w-32 border-r-2 border-[#999] bg-[#d4d4d4] pr-3 text-[19px]">运动算例1</button>
    </div>
  );
}

function StatusBar() {
  return (
    <div className="flex h-[30px] shrink-0 items-center whitespace-nowrap bg-[#f4f4f5] pl-[2px] pt-[3px] text-[19px] leading-6 text-[#222]">
      <span className="flex-1 text-[20px]">SOLIDWORKS Premium 2018 x64 版</span>
      <span className="w-[135px]">637.52mm</span>
      <span className="w-[117px]">-551.87mm</span>
      <span className="mr-[6px] w-[70px] overflow-hidden">0.00mm</span>
      <span className="w-[68px] border-r border-[#ccc]">欠定义</span>
      <span className="ml-3 w-[131px] border-x border-[#ccc] pl-1">在编辑 草图1</span>
      <span className="flex w-[50px] justify-end border-r border-[#ccc] pr-1"><TrafficIcon size="w-6 h-6" /></span>
      <button type="button" className="ml-[47px] flex w-[91px] items-center justify-between">
        自定义
        <svg viewBox="0 0 8 6" className="h-[6px] w-2" fill="#333"><path d="M0 6h8L4 0z" /></svg>
      </button>
      <span className="ml-[108px] mr-[35px]">
        <Ico size="w-7 h-6"><path d="m4 12 6-9 11-1 9 15-12 9q-9-4-14-14z" fill="#ddd" /><path d="m4 12 1 5 13 12 12-9v-3" strokeWidth="1.700" /><circle cx="12" cy="8" r="2" strokeWidth="1.500" /><path d="m14 14 7-6M17 18l7-6" strokeWidth="1.500" /></Ico>
      </span>
    </div>
  );
}

function Banner() {
  return (
    <div className="absolute -top-[5px] left-1/2 z-20 flex h-[25px] w-[728px] -translate-x-1/2 items-center justify-center whitespace-pre bg-white pb-[2px] font-['Liberation_Mono','Noto_Sans_CJK_SC',monospace] text-[22px] leading-6 text-[#e76be0]">
      <span>www.51zxw.net(</span><span className="text-[25px]">我要自学网</span><span>) </span>
      <span className="text-[25px]">原创出品</span><span> ---- </span><span className="text-[25px]">录制老师：谭老师</span>
    </div>
  );
}

function Player() {
  return (
    <footer className="relative flex h-[129px] shrink-0 items-center bg-[#181818] pl-[46px] pr-[42px] font-['Inter','Noto_Sans_CJK_SC',sans-serif] text-[24px] text-[#c8c8c8]">
      <button type="button" className="w-[65px] text-left text-[31px]">1倍</button>
      <IconButton label="Play">
        <svg viewBox="0 0 38 32" className="h-8 w-[38px]" fill="#a0a0a0"><path d="M0 0v32l38-16z" /></svg>
      </IconButton>
      <time className="ml-[39px] w-[90px]">06:01</time>
      <input
        type="range"
        aria-label="Playback position"
        min={0}
        max={635}
        defaultValue={360}
        className="h-2 min-w-0 flex-1 appearance-none rounded-full bg-[linear-gradient(90deg,#cb6802_56.6%,#666_56.6%)] [&::-webkit-slider-thumb]:h-6 [&::-webkit-slider-thumb]:w-6 [&::-webkit-slider-thumb]:appearance-none [&::-webkit-slider-thumb]:rounded-full [&::-webkit-slider-thumb]:border-8 [&::-webkit-slider-thumb]:border-[#d8d8d8] [&::-webkit-slider-thumb]:bg-[#777]"
      />
      <time className="ml-[18px] w-[88px]">10:35</time>
      <IconButton label="Previous">
        <svg viewBox="0 0 60 32" className="h-8 w-[60px]" fill="#9b9b9b"><path d="M0 0h5v32H0zM34 0v32L8 16zM60 0v32L34 16z" /></svg>
      </IconButton>
      <IconButton label="Next" className="ml-[39px]">
        <svg viewBox="0 0 60 32" className="h-8 w-[60px]" fill="#9b9b9b"><path d="M55 0h5v32h-5zM26 0v32l26-16zM0 0v32l26-16z" /></svg>
      </IconButton>
      <IconButton label="Share" className="ml-[43px]">
        <svg viewBox="0 0 56 54" className="h-[54px] w-14" fill="none" stroke="#b5b5b5" strokeWidth="3">
          <circle cx="11" cy="27" r="9" /><circle cx="44" cy="11" r="9" /><circle cx="44" cy="43" r="9" />
          <path d="m18 21 17-9M20 25l18-9M18 33l17 9M20 29l18 9" strokeWidth="2.500" />
        </svg>
      </IconButton>
      <a href="https://blog.csdn.net/SUPER666ME" className="absolute bottom-[7px] right-[10px] font-['Liberation_Sans',sans-serif] text-[16px] leading-6 text-[#bdbdbd]">
        https://blog.csdn.net/SUPER666ME
      </a>
    </footer>
  );
}

export default function App() {
  return (
    <div className="flex min-h-screen flex-col bg-black font-['Noto_Sans','Noto_Sans_CJK_SC',sans-serif]">
      <header className="shrink-0 font-['Inter','Noto_Sans_CJK_SC',sans-serif] text-[#eee]">
        <div className="grid h-10 grid-cols-3 items-center text-[24px]">
          <time className="col-start-2 text-center">08:05</time>
          <div className="flex items-center justify-end gap-3 pr-[29px] text-[22px]">
            28%
            <svg viewBox="0 0 40 20" className="h-5 w-10" fill="none" stroke="#ddd" strokeWidth="2">
              <rect x="1" y="2" width="34" height="16" rx="2" />
              <path d="M4 5h9v10H4z" fill="#fff" stroke="none" />
              <path d="M38 7v6" strokeWidth="3" />
            </svg>
          </div>
        </div>
        <div className="flex h-[89px] items-center pb-[9px] pl-7 pr-[54px] text-[32px]">
          <button type="button" className="flex items-center gap-3">
            <svg viewBox="0 0 24 42" className="h-[42px] w-6" fill="none" stroke="#fff" strokeWidth="4"><path d="M22 2 3 21l19 19" /></svg>
            <span>1-10 图形的选择技巧及删除</span>
          </button>
          <button type="button" className="ml-auto text-[33px]">笔记</button>
          <IconButton label="Chapters" className="ml-10">
            <svg viewBox="0 0 46 38" className="h-[38px] w-[46px]" fill="#fff">
              <path d="M0 0h7v7H0zM12 0h34v7H12zM0 16h7v7H0zM12 16h34v7H12zM0 31h7v7H0zM12 31h34v7H12z" />
            </svg>
          </IconButton>
          <IconButton label="More" className="ml-[60px]">
            <svg viewBox="0 0 12 48" className="h-12 w-3" fill="#fff"><circle cx="6" cy="6" r="5.500" /><circle cx="6" cy="24" r="5.500" /><circle cx="6" cy="42" r="5.500" /></svg>
          </IconButton>
        </div>
      </header>

      <section className="relative flex flex-1 flex-col border-b-4 border-r-[6px] border-t-[5px] border-b-[#2c6680] border-r-[#2f8068] border-t-[#45698c] bg-[#d7dae6] pb-[10px] pl-[13px] pr-3">
        <Banner />
        <TitleBar />
        <Ribbon />
        <div className="relative -mt-[2px] flex flex-1">
          <CommandTabs />
          <PropertyPanel />
          <Canvas />
        </div>
        <ModelTabs />
        <StatusBar />

        {/* screen lock toggle */}
        <button type="button" aria-label="Unlock screen" className="absolute left-20 top-[584px] z-20 flex h-[100px] w-[100px] items-center justify-center rounded-[20px] bg-[#333]/80">
          <svg viewBox="0 0 60 58" className="h-[58px] w-[60px]" fill="none" stroke="#f4f4f4" strokeWidth="3">
            <rect x="2" y="23" width="40" height="33" rx="2" />
            <path d="M33 23V14a13 13 0 0 1 26 0v10" />
            <circle cx="22" cy="36" r="4" fill="#fff" stroke="none" />
            <path d="M22 37v9" />
          </svg>
        </button>
      </section>

      <Player />
    </div>
  );
}
